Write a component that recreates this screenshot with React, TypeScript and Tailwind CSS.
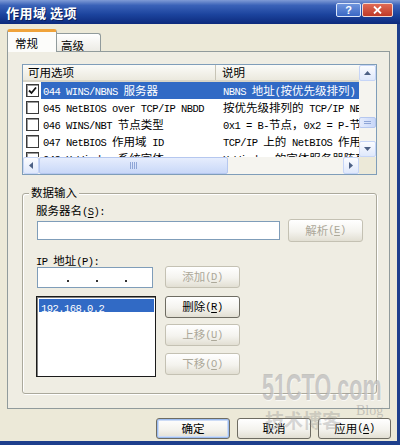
import clsx from "clsx";

type Seg = { s: string; ascii: boolean; u: boolean };

// split text into latin / cjk runs, "&X" underlines X like a Windows mnemonic
function split(text: string): Seg[] {
  const out: Seg[] = [];
  let under = false;
  for (const ch of text) {
    if (ch === "&") {
      under = true;
      continue;
    }
    const ascii = ch.charCodeAt(0) < 0x2000;
    const last = out[out.length - 1];
    if (!under && last && last.ascii === ascii && !last.u) last.s += ch;
    else out.push({ s: ch, ascii, u: under });
    under = false;
  }
  return out;
}

function Txt({ text }: { text: string }) {
  return (
    <>
      {split(text).map((p, i) => (
        <span
          key={i}
          className={clsx(
            p.ascii
              ? "font-['Liberation_Mono',monospace] text-[10.5px] tracking-[-0.55px]"
              : "text-[11.5px]",
            p.u && "underline underline-offset-2"
          )}
        >
          {p.s}
        </span>
      ))}
    </>
  );
}

function Btn({
  label,
  disabled,
  primary,
  className,
}: {
  label: string;
  disabled?: boolean;
  primary?: boolean;
  className?: string;
}) {
  return (
    <div
      className={clsx(
        "flex items-center justify-center rounded-[3px] border whitespace-pre leading-none bg-[linear-gradient(to_bottom,#ffffff,#f4f3ee_55%,#e2dfd3)]",
        disabled ? "border-[#c4c1b3] text-[#aca899]" : "border-[#6e6c62] text-black",
        primary && "border-[#1d4a8a] shadow-[inset_0_0_0_1px_#9cbcf0,inset_0_0_0_2px_#cddcf6]",
        className
      )}
    >
      <Txt text={label} />
    </div>
  );
}

function Arrow({ dir }: { dir: "up" | "down" | "left" | "right" }) {
  const pts = {
    up: "0,4 7,4 3.5,0",
    down: "0,0 7,0 3.5,4",
    left: "4,0 4,7 0,3.5",
    right: "0,0 0,7 4,3.5",
  }[dir];
  const w = dir === "up" || dir === "down" ? 7 : 4;
  const h = dir === "up" || dir === "down" ? 4 : 7;
  return (
    <svg width={w} height={h} viewBox={`0 0 ${w} ${h}`}>
      <polygon points={pts} fill="#4d6185" />
    </svg>
  );
}

function ScrollBtn({ dir, className }: { dir: "up" | "down" | "left" | "right"; className?: string }) {
  return (
    <div
      className={clsx(
        "flex items-center justify-center rounded-[2px] border border-[#c6d5f7] bg-[linear-gradient(to_bottom,#fbfcff,#dfe8fb)]",
        className
      )}
    >
      <Arrow dir={dir} />
    </div>
  );
}

function Check() {
  return (
    <div className="w-[13px] h-[13px] border border-[#3a3a3a] bg-white flex items-center justify-center shadow-[inset_1px_1px_0_#9a9a9a]">
      <svg width="9" height="9" viewBox="0 0 9 9">
        <path d="M1 4.5 L3.5 7 L8 1.5" stroke="#111" strokeWidth="1.8" fill="none" />
      </svg>
    </div>
  );
}

function Box() {
  return <div className="w-[13px] h-[13px] border border-[#3a3a3a] bg-white shadow-[inset_1px_1px_0_#9a9a9a]" />;
}

const rows = [
  { a: "044 WINS/NBNS 服务器", b: "NBNS 地址(按优先级排列)", checked: true },
  { a: "045 NetBIOS over TCP/IP NBDD", b: "按优先级排列的 TCP/IP NBDD 地址" },
  { a: "046 WINS/NBT 节点类型", b: "0x1 = B-节点，0x2 = P-节点，0x4 = M-节点" },
  { a: "047 NetBIOS 作用域 ID", b: "TCP/IP 上的 NetBIOS 作用域 ID" },
  { a: "048 X Window 系统字体", b: "X Window 的字体服务器阵列" },
];

function ListView() {
  return (
    <div className="w-[355px] h-[111px] border border-[#7f9db9] bg-white flex flex-col">
      <div className="flex h-[92px]">
        <div className="w-[336px] overflow-hidden">
          {/* header */}
          <div className="flex h-[17px] items-center border-b-2 border-[#d8d5c8] bg-[linear-gradient(to_bottom,#fbfbf8,#ebe9de)] leading-[15px] whitespace-pre">
            <div className="w-[193px] pl-[5px] border-r border-[#c7c4b6] h-full flex items-center">
              <Txt text="可用选项" />
            </div>
            <div className="pl-[6px] h-full flex items-center">
              <Txt text="说明" />
            </div>
          </div>
          {rows.map((r, i) => (
            <div key={i} className="flex h-[17px] items-center whitespace-pre">
              <div className="ml-[3px]">{r.checked ? <Check /> : <Box />}</div>
              <div
                className={clsx(
                  "ml-[2px] flex-1 flex h-[17px] items-center leading-[17px] overflow-hidden",
                  i === 0 && "bg-[#316ac5] text-white"
                )}
              >
                <div className="w-[175px] shrink-0 pl-[2px] overflow-hidden">
                  <Txt text={r.a} />
                </div>
                <div className="pl-[7px] shrink-0">
                  <Txt text={r.b} />
                </div>
              </div>
            </div>
          ))}
        </div>
        {/* vertical scrollbar */}
        <div className="w-[17px] flex flex-col bg-[#f5f4ef]">
          <ScrollBtn dir="up" className="h-[16px]" />
          <div className="h-[36px]" />
          <div className="h-[11px] rounded-[2px] border border-[#b5c7ef] bg-[linear-gradient(to_right,#e4ebfc,#c8d7f8)] flex flex-col items-center justify-center gap-[1px]">
            <div className="w-[7px] h-px bg-[#8ea5d6]" />
            <div className="w-[7px] h-px bg-[#8ea5d6]" />
          </div>
          <div className="h-[13px]" />
          <ScrollBtn dir="down" className="h-[16px]" />
        </div>
      </div>
      <div className="flex h-[17px]">
        {/* horizontal scrollbar */}
        <div className="w-[336px] flex bg-[#f5f4ef]">
          <ScrollBtn dir="left" className="w-[16px]" />
          <div className="w-[189px] rounded-[2px] border border-[#b5c7ef] bg-[linear-gradient(to_bottom,#e6edfd,#c9d8f8)] flex items-center justify-center gap-[1px]">
            <div className="w-px h-[7px] bg-[#8ea5d6]" />
            <div className="w-px h-[7px] bg-[#8ea5d6]" />
            <div className="w-px h-[7px] bg-[#8ea5d6]" />
            <div className="w-px h-[7px] bg-[#8ea5d6]" />
          </div>
          <div className="flex-1" />
          <ScrollBtn dir="right" className="w-[16px]" />
        </div>
        <div className="w-[17px] bg-[#ECE9D8]" />
      </div>
    </div>
  );
}

function Group() {
  return (
    <div className="relative mt-[18px] w-[355px] h-[201px] rounded-[3px] border border-[#aba99c] shadow-[inset_1px_1px_0_#ffffff,1px_1px_0_#ffffff]">
      <div className="absolute -top-[12px] left-[6px] px-[2px] bg-[#EFEDE3] leading-[16px] whitespace-pre">
        <Txt text="数据输入" />
      </div>

      <div className="mt-[6px] ml-[13px] h-[16px] leading-[16px] whitespace-pre">
        <Txt text="服务器名(&S):" />
      </div>
      <div className="mt-[3px] flex items-center h-[23px]">
        <div className="ml-[14px] w-[243px] h-[19px] border border-[#7f9db9] bg-white" />
        <Btn label="解析(&E)" disabled className="ml-[8px] w-[75px] h-[23px]" />
      </div>

      <div className="mt-[8px] ml-[13px] h-[16px] leading-[16px] whitespace-pre">
        <Txt text="IP 地址(&P):" />
      </div>
      <div className="flex items-start h-[22px]">
        <div className="ml-[14px] mt-[1px] w-[116px] h-[21px] border border-[#7f9db9] bg-white flex items-end pb-[5px]">
          <div className="ml-[29px] w-[2px] h-[2px] bg-[#333]" />
          <div className="ml-[27px] w-[2px] h-[2px] bg-[#333]" />
          <div className="ml-[27px] w-[2px] h-[2px] bg-[#333]" />
        </div>
        <Btn label="添加(&D)" disabled className="ml-[12px] w-[75px] h-[22px]" />
      </div>

      <div className="mt-[8px] flex items-start">
        <div className="ml-[13px] w-[120px] h-[81px] border border-[#1b1b1b] bg-white shadow-[inset_1px_1px_0_#808080] p-[1px]">
          <div className="mt-px ml-px w-[115px] h-[13px] bg-[#316ac5] text-white pl-[2px] leading-[13px] whitespace-pre">
            <Txt text="192.168.0.2" />
          </div>
        </div>
        <div className="ml-[9px] flex flex-col">
          <Btn label="删除(&R)" className="w-[75px] h-[22px]" />
          <Btn label="上移(&U)" disabled className="mt-[6px] w-[75px] h-[22px]" />
          <Btn label="下移(&O)" disabled className="mt-[7px] w-[75px] h-[22px]" />
        </div>
      </div>
    </div>
  );
}

export default function App() {
  return (
    <div className="relative w-[400px] h-[445px] overflow-hidden flex flex-col bg-[#ECE9D8] font-['Noto_Sans_CJK_SC',sans-serif] text-black">
      {/* title bar */}
      <div className="h-[24px] flex items-center justify-between pl-[6px] pr-[7px] bg-[linear-gradient(to_bottom,#7f9bd6_0%,#3a62b8_22%,#1c449e_60%,#0c2a7c_100%)]">
        <span className="text-white text-[13px] font-bold leading-none tracking-[0.5px] [text-shadow:1px_1px_0_#0a1f5c]">
          作用域 选项
        </span>
        <div className="flex -mt-[4px]">
          <div className="w-[25px] h-[14px] rounded-[2px] border border-[#dbe6fa] bg-[linear-gradient(to_bottom,#6f95dd,#3a67c4)] flex items-center justify-center text-white text-[11px] font-bold font-['Liberation_Sans',sans-serif] leading-none">
            ?
          </div>
          <div className="ml-px w-[31px] h-[14px] rounded-[2px] border border-[#f1d6d0] bg-[linear-gradient(to_bottom,#e06a55,#bf3a28)] flex items-center justify-center">
            <svg width="9" height="8" viewBox="0 0 9 8">
              <path d="M1 0.5 L8 7.5 M8 0.5 L1 7.5" stroke="#fff" strokeWidth="1.8" />
            </svg>
          </div>
        </div>
      </div>

      <div className="flex-1 flex flex-col border-r-[3px] border-b-[4px] border-[#1e3f8c] pl-[7px] pt-[5px]">
        {/* tabs */}
        <div className="flex items-end h-[22px]">
          <div className="relative z-10 -mb-px w-[50px] h-[23px] border-x border-[#919b9c] border-t-[3px] border-t-[#f0a33a] rounded-t-[3px] bg-[#fcfcfa] pl-[7px] leading-[18px] whitespace-pre">
            <Txt text="常规" />
          </div>
          <div className="w-[44px] h-[18px] border-t border-r border-[#919b9c] rounded-tr-[3px] bg-[linear-gradient(to_bottom,#ffffff,#ecebe5)] pl-[4px] leading-[18px] whitespace-pre">
            <Txt text="高级" />
          </div>
        </div>

        {/* tab page */}
        <div className="w-[383px] h-[358px] border border-[#919b9c] bg-[#EFEDE3] pl-[14px] pt-[12px]">
          <ListView />
          <Group />
        </div>

        <div className="flex gap-[7px] mt-[9px] ml-[149px]">
          <Btn label="确定" primary className="w-[74px] h-[21px]" />
          <Btn label="取消" className="w-[74px] h-[21px]" />
          <Btn label="应用(&A)" className="w-[73px] h-[21px]" />
        </div>
      </div>

      {/* watermark baked into the screenshot */}
      <div className="pointer-events-none absolute left-[262px] top-[370px] text-[36px] font-bold font-['Liberation_Sans',sans-serif] leading-none scale-x-[0.6] origin-left text-[#9c9c9c]/50 [text-shadow:1px_1px_0_rgba(255,255,255,0.6)]">
        51CTO.com
      </div>
      <div className="pointer-events-none absolute left-[265px] top-[410px] text-[19px] font-bold leading-none text-[#8f8f8f]/35">
        技术博客
      </div>
      <div className="pointer-events-none absolute left-[356px] top-[404px] text-[14px] font-['Liberation_Serif',serif] leading-none text-[#8f8f8f]/45">
        Blog
      </div>
    </div>
  );
}
